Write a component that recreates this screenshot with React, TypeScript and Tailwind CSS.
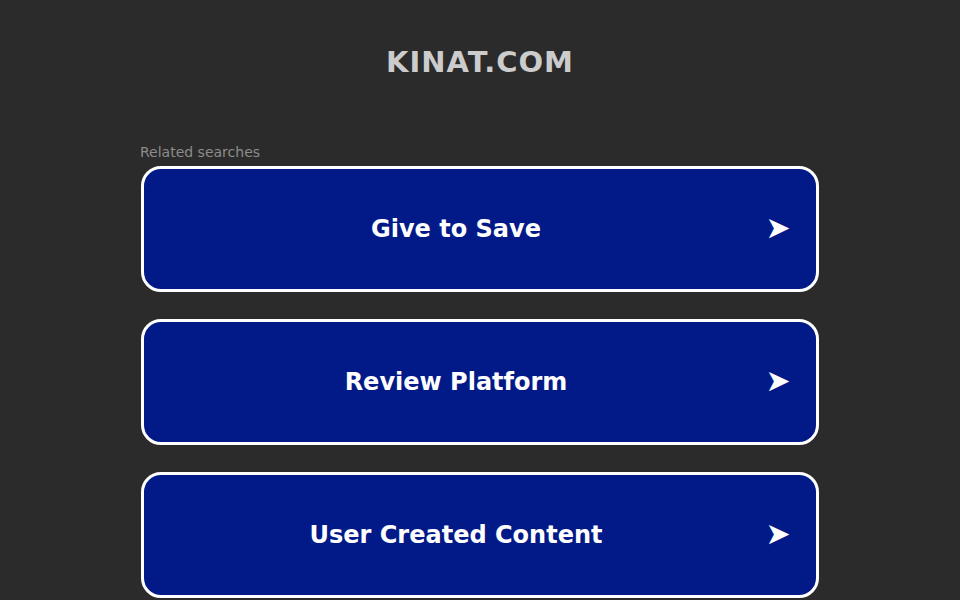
const searches = ["Give to Save", "Review Platform", "User Created Content"];

const SearchLink = ({ label }: { label: string }) => {
    return <a href="#" className="flex items-center h-[126px] rounded-[20px] border-[3px] border-white bg-[#021a88] text-white no-underline">
        <span className="flex-1 pl-[28px] text-center text-[24px] font-bold">{label}</span>
        <span className="w-[76px] -mt-[3px] text-center text-[30px] leading-none">➤</span>
    </a>
}

export default function App() {
    return <div className="min-h-[600px] bg-[#2b2b2b] font-['DejaVu_Sans',sans-serif]">
        <header className="pt-[43px] text-center text-[29px] font-bold tracking-[1px] text-[#cccccc] leading-[38px]">KINAT.COM</header>
        <main className="w-[678px] mx-auto mt-[63px]">
            <div className="text-[14px] text-[#8c8c8c] leading-[16px] mb-[6px] -ml-[1px]">Related searches</div>
            <div className="flex flex-col gap-[27px]">
                {searches.map((s) => <SearchLink key={s} label={s} />)}
            </div>
        </main>
    </div>
}
